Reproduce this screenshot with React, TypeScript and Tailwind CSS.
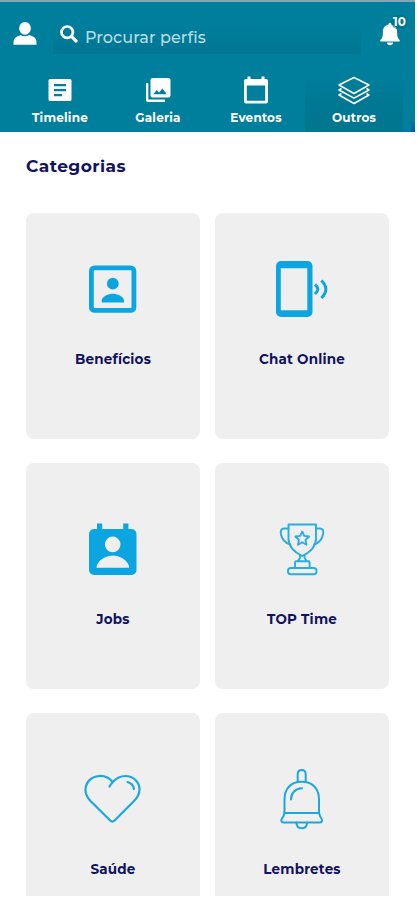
import type { ReactNode } from 'react';
import clsx from 'clsx';

function ProfileIcon() {
    return (
        <svg viewBox="0 0 24 24" className="h-6 w-6 fill-white">
            <path d="M12 0C8.8 0 6.200 2.800 6.200 6.300S8.800 12.700 12 12.700s5.800-2.900 5.800-6.400S15.200 0 12 0Z" />
            <path d="M7.800 13 3.600 14.800C1.600 15.900.5 18 .5 20.500V22.700h23v-2.200c0-2.500-1.100-4.600-3.100-5.700L16.200 13c-2.300 1.600-6.100 1.600-8.400 0Z" />
        </svg>
    );
}

function SearchIcon() {
    return (
        <svg viewBox="0 0 18 18" className="h-[18px] w-[18px]" fill="none" stroke="#fff" strokeWidth="2.700">
            <circle cx="7.200" cy="7.200" r="5.700" />
            <path d="m11.400 11.400 5.600 5.600" strokeWidth="3.200" />
        </svg>
    );
}

function NotificationIcon() {
    return (
        <svg viewBox="0 0 20 24" className="h-6 w-5 fill-white">
            <path d="M10 .8c.9 0 1.500.7 1.500 1.700 3.700.8 5.600 3.700 5.600 7.200 0 5.300.9 6.600 2.400 8 .6.600.4 1.800-.7 1.800H1.200c-1.100 0-1.300-1.200-.7-1.800 1.500-1.400 2.400-2.700 2.400-8 0-3.500 1.900-6.400 5.600-7.200 0-1 .6-1.700 1.500-1.700Z" />
            <path d="M7 20.400h6c0 1.700-1.300 2.800-3 2.800s-3-1.100-3-2.800Z" />
        </svg>
    );
}

const tabs: { label: string; active?: boolean; icon: ReactNode }[] = [
    {
        label: 'Timeline',
        icon: (
            <path
                fill="#fff"
                fillRule="evenodd"
                d="M7 4h20a1.500 1.500 0 0 1 1.500 1.500v19a1.500 1.500 0 0 1-1.500 1.500H7a1.500 1.500 0 0 1-1.500-1.500v-19A1.500 1.500 0 0 1 7 4Zm4 5v2.200h12V9H11Zm0 5v2.200h12V14H11Zm0 5v2.200h8V19h-8Z"
            />
        ),
    },
    {
        label: 'Galeria',
        icon: (
            <>
                <path fill="#fff" d="M5 8h2.300v16.500H24V27H7a2 2 0 0 1-2-2V8Z" />
                <path
                    fill="#fff"
                    fillRule="evenodd"
                    d="M11.500 3H27.500a2 2 0 0 1 2 2v15.500a2 2 0 0 1-2 2H11.500a2 2 0 0 1-2-2V5a2 2 0 0 1 2-2Zm.9 16.300h13.400l-4.400-5.900-3.300 4.200-2.400-2.500-3.300 4.200Z"
                />
            </>
        ),
    },
    {
        label: 'Eventos',
        icon: (
            <path
                fill="#fff"
                fillRule="evenodd"
                d="M8.500 1.500h3V4h11V1.500h3V4H27a2 2 0 0 1 2 2v20.500a2 2 0 0 1-2 2H7a2 2 0 0 1-2-2V6a2 2 0 0 1 2-2h1.500V1.500ZM7.800 10.500v15.300h18.400V10.500H7.800Z"
            />
        ),
    },
    {
        label: 'Outros',
        active: true,
        icon: (
            <g fill="none" stroke="#fff" strokeWidth="1.500" strokeLinejoin="round">
                <path d="M17 2.500 32 10 17 18.500 2 10 17 2.500Z" />
                <path d="M4.500 13.500 2 15l15 8.200L32 15l-2.500-1.500" />
                <path d="M4.500 18.500 2 20l15 8.500L32 20l-2.500-1.500" />
            </g>
        ),
    },
];

const categories: { label: string; icon: ReactNode }[] = [
    {
        label: 'Benefícios',
        icon: (
            <>
                <rect x="18.400" y="10.900" width="42.500" height="42.500" rx="3" fill="none" stroke="#0ba6e1" strokeWidth="4.800" />
                <circle cx="39.800" cy="26.700" r="5.900" />
                <path d="M28.700 45.500v-1.700c0-4.700 7.400-7 11.100-7s11.200 2.300 11.200 7v1.700H28.700Z" />
            </>
        ),
    },
    {
        label: 'Chat Online',
        icon: (
            <>
                <path
                    fillRule="evenodd"
                    d="M19 4h26.500a5 5 0 0 1 5 5v46a5 5 0 0 1-5 5H19a5 5 0 0 1-5-5V9a5 5 0 0 1 5-5Zm-.2 7.200v42h26.500v-42H18.800Z"
                />
                <path d="M53 27.500q5.600 4.500 0 9.500M59.400 23.500q8.800 8.500 0 17.500" fill="none" stroke="#0ba6e1" strokeWidth="3" />
            </>
        ),
    },
    {
        label: 'Jobs',
        icon: (
            <path
                fillRule="evenodd"
                d="M24 6.500h5.200V12h21V6.500h5.200V12h3.100a5 5 0 0 1 5 5v36a5 5 0 0 1-5 5H21a5 5 0 0 1-5-5V17a5 5 0 0 1 5-5h3V6.500ZM39.700 19.600a7.800 7.800 0 1 0 0 15.600 7.800 7.800 0 0 0 0-15.600ZM23.500 50.800h32.700c0-7.800-10.800-12.400-16.400-12.400S23.500 43 23.500 50.800Z"
            />
        ),
    },
    {
        label: 'TOP Time',
        icon: (
            <g
                fill="none"
                stroke="#2aabe2"
                strokeWidth="1.900"
                strokeLinejoin="round"
                strokeLinecap="round"
                transform="translate(.5)"
            >
                <path d="M26 7.500h27.500v14c0 8-4.500 13-13.700 17.500C30.500 34.500 26 29.500 26 21.500v-14Z" />
                <path d="M26 11.500h-4.500c-2.500 0-3.700 2-3.200 5 .9 5.500 3.700 9.200 9.500 11M53.500 11.500h4c2.500 0 3.700 2 3.200 5-.9 5.500-3.700 9.200-9 11" />
                <path d="m39.700 14.500 2 4.400 4.900.600-3.600 3.400.9 4.800-4.200-2.400-4.200 2.400.9-4.800-3.600-3.400 4.900-.600 2-4.400Z" />
                <path d="M37.500 38.500v2.500L35 44.300M42 38.500v2.500l2.500 3.300M32.500 51v-5.500c0-.8.5-1.200 1.300-1.200h12c.8 0 1.300.4 1.300 1.200V51" />
                <rect x="25.500" y="51" width="28.500" height="6.200" rx="2.800" />
            </g>
        ),
    },
    {
        label: 'Saúde',
        icon: (
            <g fill="none" stroke="#1ca7e0" strokeWidth="2.200" strokeLinecap="round" strokeLinejoin="round">
                <path d="M36.500 19.500c1-2 2.800-3.700 3.200-4.400C36.500 10.800 31.500 8.700 26 9 18 9.500 12.500 15.500 12.500 23c0 4 1.800 7.500 5 11l19.700 19.500c1.500 1.400 3 1.400 4.400 0L61 34c3.300-3.400 5.500-7 5.500-11.500 0-7.500-6-13.500-14-13.500-5.300 0-9.300 2.300-12.800 6.100" />
                <path d="M54.500 15c3.700 1 5.900 3.200 6.500 7" />
            </g>
        ),
    },
    {
        label: 'Lembretes',
        icon: (
            <g fill="none" stroke="#1ca7e0" strokeWidth="2" strokeLinecap="round" strokeLinejoin="round">
                <path d="M35.700 14.800V7.200c0-2.500 1.200-4.200 4-4.200s4 1.700 4 4.200v7.600" />
                <path d="M22.500 46V32.500c0-11 6.500-17.700 17.200-17.700S57 21.500 57 32.500V46" />
                <path d="M22.500 46H57c.5 2.500 1.500 4.300 2.700 6 .9 1.300.2 3.500-2 3.500h-36c-2.200 0-2.900-2.200-2-3.500 1.300-1.700 2.300-3.500 2.800-6Z" />
                <path d="M34.500 55.500c0 3.700 2 5.700 5.200 5.700s5.300-2 5.300-5.700M29 32.500c0-6.500 4.500-11 11-11.200" />
            </g>
        ),
    },
];

export default function App() {
    return (
        <div className="flex h-[900px] w-[417px] flex-col overflow-hidden bg-white font-['Montserrat','Inter',sans-serif]">
            <header className="mr-0.5 h-[132px] border-t-2 border-[#83a5b9] bg-[#007f9d]">
                <div className="flex h-[72px] items-start pt-5 pr-[15px] pl-[13px]">
                    <ProfileIcon />
                    <div className="ml-4 flex h-8 w-[308px] items-center bg-linear-to-b from-[#007f9d] to-[#007692] pl-[7px]">
                        <div className="mb-2">
                            <SearchIcon />
                        </div>
                        <span className="ml-[7px] text-[16px] leading-5 font-medium tracking-[0.1px] text-[#b9dce5]">Procurar perfis</span>
                    </div>
                    <button className="relative ml-[19px]">
                        <NotificationIcon />
                        <span className="absolute -top-[7px] left-[11px] rounded-full bg-[#006a85]/60 px-0.5 text-[12px] leading-[14px] font-bold text-white">
                            10
                        </span>
                    </button>
                </div>

                <nav className="flex h-[58px] pl-[11px]">
                    {tabs.map(({ label, active, icon }) => (
                        <button
                            key={label}
                            className={clsx(
                                'flex w-[98px] flex-col items-center pt-px',
                                active && 'bg-linear-to-b from-[#007f9d] via-[#007893] to-[#007690]',
                            )}
                        >
                            <svg viewBox="0 0 34 30" className="h-[30px] w-[34px]">
                                {icon}
                            </svg>
                            <span className="mt-[5px] text-[12px] leading-4 font-bold tracking-[0.2px] text-white">{label}</span>
                        </button>
                    ))}
                    <span className="ml-auto h-2.5 w-1 self-end bg-linear-to-b from-[#0075a5] to-[#0059b8]" />
                </nav>
            </header>

            <main className="h-[764px] overflow-hidden pr-7 pl-[26px]">
                <h1 className="pt-[22px] text-[17px] leading-6 font-bold tracking-[0.45px] text-[#111260]">Categorias</h1>

                <div className="mt-[35px] grid grid-cols-2 gap-x-[15px] gap-y-6">
                    {categories.map(({ label, icon }, index) => (
                        <article
                            key={label}
                            className={clsx(
                                'flex h-[226px] flex-col items-center rounded-lg bg-[#efefef]',
                                index < 2 ? 'pt-11' : 'pt-[54px]',
                            )}
                        >
                            <svg viewBox="0 0 80 64" className="h-16 w-20 fill-[#0ba6e1]">
                                {icon}
                            </svg>
                            <h2 className="mt-7 text-[13.5px] leading-5 font-bold tracking-[0.2px] text-[#111260]">{label}</h2>
                        </article>
                    ))}
                </div>
            </main>
        </div>
    );
}
